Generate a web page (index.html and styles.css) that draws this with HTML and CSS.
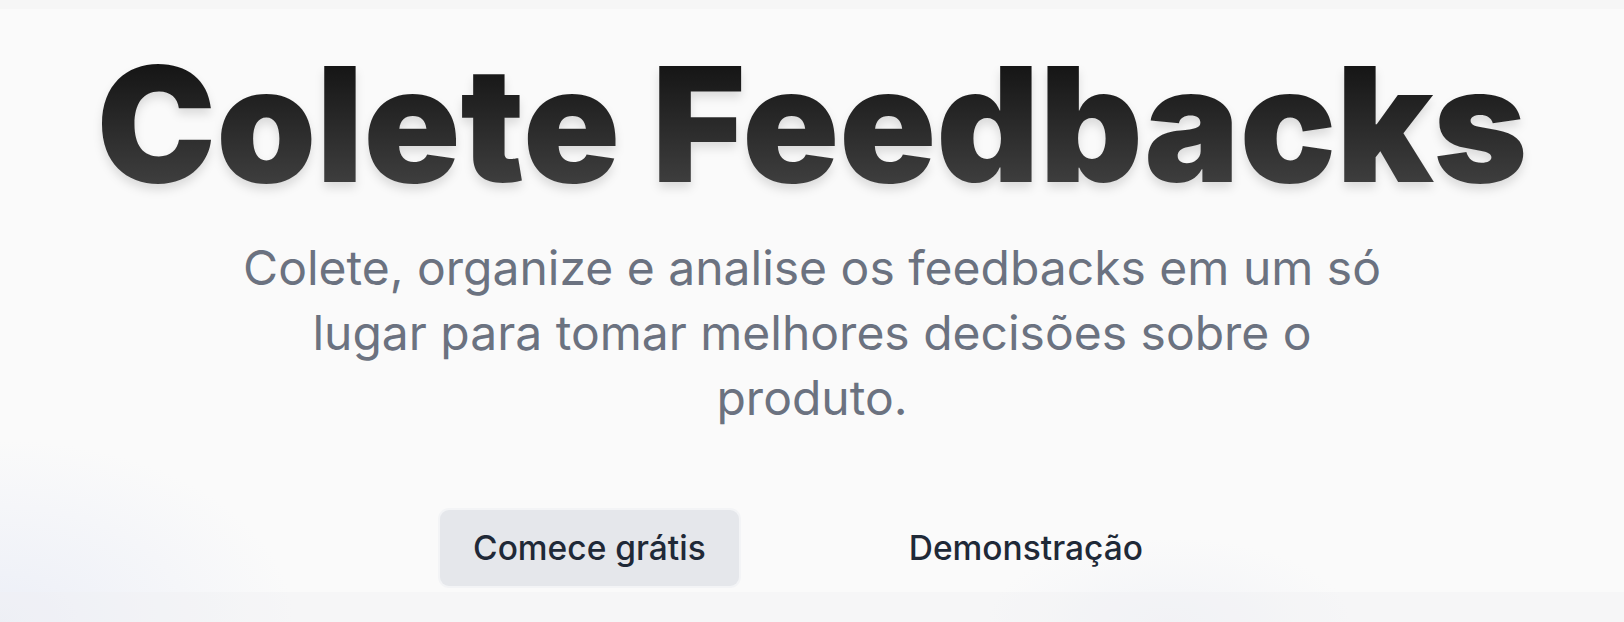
FILE: index.html
```html
<!DOCTYPE html>
<html lang="pt-BR">
<head>
<meta charset="utf-8">
<title>Colete Feedbacks</title>
<link rel="stylesheet" href="styles.css">
</head>
<body>
<div class="topbar"></div>
<main class="hero">
  <h1 class="hero-title">Colete Feedbacks</h1>
  <p class="hero-sub">Colete, organize e analise os feedbacks em um só lugar para tomar melhores decisões sobre o produto.</p>
  <div class="hero-actions">
    <a class="btn btn-primary" href="#">Comece grátis</a>
    <a class="btn btn-ghost" href="#">Demonstração</a>
  </div>
</main>
<div class="bottombar"></div>
</body>
</html>
```

FILE: styles.css
```css
* { box-sizing: border-box; }
html, body { margin: 0; padding: 0; }
body {
  font-family: Inter, "Noto Sans", sans-serif;
  background:
    radial-gradient(ellipse 420px 260px at 0% 100%, rgba(225, 230, 245, 0.55), rgba(250,250,250,0) 70%),
    radial-gradient(ellipse 260px 120px at 72% 100%, rgba(228, 232, 242, 0.35), rgba(250,250,250,0) 70%),
    #fafafa;
  height: 622px;
  overflow: hidden;
  display: flex;
  flex-direction: column;
}
.topbar { height: 9px; background: #f6f6f6; flex: none; }
.hero {
  flex: 1;
  display: flex;
  flex-direction: column;
  align-items: center;
  text-align: center;
  padding-top: 35px;
}
.hero-title {
  margin: 0;
  font-size: 160px;
  line-height: 160px;
  font-weight: 900;
  letter-spacing: 0;
  background: linear-gradient(180deg, #0e0e0e 0%, #454545 100%);
  -webkit-background-clip: text;
  background-clip: text;
  -webkit-text-fill-color: transparent;
  color: transparent;
  filter: drop-shadow(0 6px 5px rgba(0, 0, 0, 0.12));
}
.hero-sub {
  margin: 31px 0 0;
  max-width: 1165px;
  font-size: 48px;
  line-height: 65px;
  color: #6b7280;
  font-weight: 400;
}
.hero-actions {
  margin-top: 80px;
  display: flex;
  gap: 137px;
  transform: translateX(-4px);
}
.btn {
  display: flex;
  align-items: center;
  height: 76px;
  padding: 0 33px;
  border-radius: 9px;
  font-size: 33.5px;
  font-weight: 500;
  color: #1f2937;
  text-decoration: none;
}
.btn-primary {
  background: #e5e7eb;
  box-shadow: 0 0 0 2px #f3f4f6;
}
.bottombar { height: 30px; flex: none; background: rgba(240,240,242,0.4); }
```
